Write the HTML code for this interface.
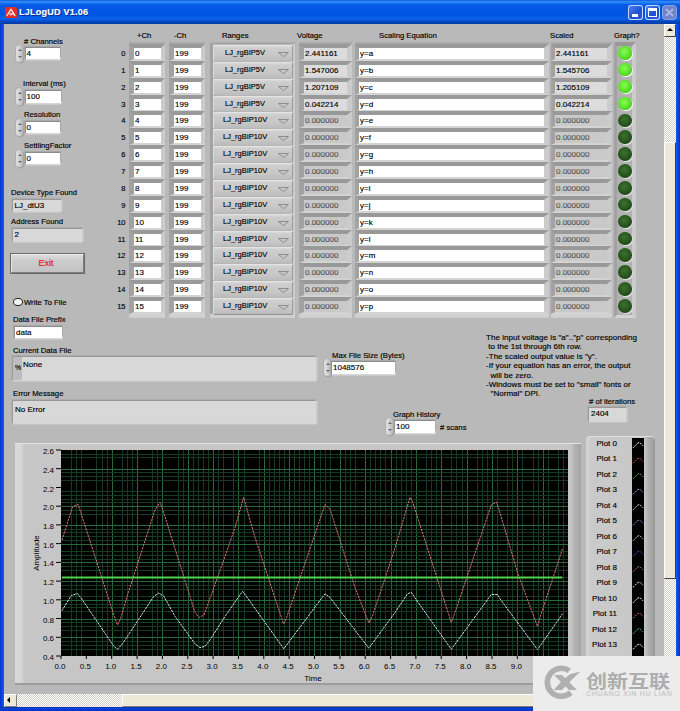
<!DOCTYPE html><html><head><meta charset="utf-8"><title>LJLogUD V1.06</title><style>
*{box-sizing:border-box;margin:0;padding:0}
html,body{width:680px;height:711px;overflow:hidden}
body{position:relative;background:#b9b9b9;font:8px "Liberation Sans","Noto Sans CJK SC",sans-serif;color:#000;-webkit-text-stroke:.15px #000}
.a{position:absolute}
.t{position:absolute;white-space:nowrap;line-height:10px;font-size:7.7px}
.wb{position:absolute;background:#fff;box-shadow:0 -1px 0 #8c8c8c,-1px -1px 0 #929292,-1px 0 0 #9a9a9a,-2px -2px 0 #a9a9a9,0 -2px 0 #a6a6a6,1px -2px 0 #aaa,-2px 0 0 #adadad,1px 0 0 #cdcdcd,0 1px 0 #d6d6d6,1px 1px 0 #d2d2d2,0 2px 0 #c9c9c9;padding-left:1px;line-height:11px;white-space:nowrap;overflow:hidden}
.ib{position:absolute;background:#d8d8d8;box-shadow:0 -1px 0 #999,-1px -1px 0 #9c9c9c,-1px 0 0 #a2a2a2,0 -2px 0 #acacac,-2px -2px 0 #b0b0b0,-2px 0 0 #b0b0b0,1px 0 0 #cecece,0 1px 0 #d4d4d4,1px 1px 0 #d0d0d0,0 2px 0 #c6c6c6,2px 0 0 #c4c4c4;padding-left:2px;line-height:12px;white-space:nowrap;overflow:hidden}
.ib.dim{background:#c6c6c6;color:#7a7a7a}
.ct{position:absolute;background:linear-gradient(90deg,#a9a9a9 0,#b1b1b1 3px,#b6b6b6 5px,#b6b6b6 calc(100% - 5px),#cfcfcf calc(100% - 2px),#d6d6d6 100%);border-top:2px solid #9a9a9a;box-shadow:inset 0 3px 2px -1px #a6a6a6, inset 0 -3px 2px -1px #d2d2d2}
.cell{position:absolute;border-style:solid;border-color:#999 #cbcbcb #d3d3d3 #a2a2a2;line-height:11px;white-space:nowrap;overflow:hidden;font-size:8px}
.sep{position:absolute;height:3px;background:linear-gradient(#d0d0d0,#bdbdbd 50%,#9c9c9c)}
.rb{position:absolute;background:linear-gradient(#d9d9d9 0,#cdcdcd 2px,#c8c8c8 60%,#bcbcbc 100%);border-bottom:1px solid #8f8f8f;border-right:1px solid #9b9b9b;border-top:1px solid #e4e4e4;border-left:1px solid #dedede;line-height:14px;white-space:nowrap;overflow:hidden;border-radius:1px}
.sp{position:absolute;width:7px;height:17px;border-radius:3.5px;background:linear-gradient(90deg,#dedede,#d6d6d6 40%,#b4b4b4);box-shadow:0 0 0 .6px #aaa,1px 1px 1px #999}
.sp:before,.sp:after{content:"";position:absolute;left:1.5px;border-left:2px solid transparent;border-right:2px solid transparent}
.sp:before{top:4px;border-bottom:2.5px solid #666}
.sp:after{bottom:4px;border-top:2.5px solid #666}
.led{position:absolute;width:14px;height:13.6px;border-radius:50%}
.led.on{background:radial-gradient(circle at 45% 40%,#8cf85c 0,#5fe82c 45%,#46c81c 80%,#3a9a20 100%);box-shadow:1.2px 1.2px .6px #ededed}
.led.off{background:radial-gradient(circle at 45% 40%,#3e7030 0,#2a5a20 45%,#1e4416 80%,#193a12 100%);box-shadow:1.2px 1.2px .6px #dcdcdc}
</style></head><body>
<div class="a" style="left:0;top:0;width:680px;height:24px;background:linear-gradient(#0a58da 0,#2f86f6 1.5px,#2a80f4 2.5px,#0b66ec 4px,#0358e4 6px,#0255e1 15px,#0a62ec 18px,#0857dc 20px,#0443b8 22px,#033aa6 24px)"></div>
<div class="a" style="left:0;top:24px;width:4px;height:687px;background:linear-gradient(90deg,#0831d9,#0a4be0 60%,#1a5ae8)"></div>
<div class="a" style="left:676px;top:24px;width:4px;height:687px;background:linear-gradient(90deg,#1a5ae8,#0a4be0 40%,#0831d9)"></div>
<div class="a" style="left:0;top:706.5px;width:680px;height:4.5px;background:linear-gradient(#0a2a90,#0a44d8 30%,#0831c9)"></div>
<svg class="a" style="left:5px;top:7px" width="12" height="11" viewBox="0 0 13 14" preserveAspectRatio="none"><rect x="0" y="0" width="13" height="14" rx="1.5" fill="#e03028"/><path d="M2 11 L6.5 3 L11 11 M4.5 9 H9.5" stroke="#fff" stroke-width="1.3" fill="none"/><path d="M6 11 L8.2 7.2 L10.4 11" stroke="#fff" stroke-width="1" fill="none"/></svg>
<div class="t" style="left:19px;top:5px;font-size:9px;line-height:15px;font-weight:bold;color:#fff;letter-spacing:.25px;-webkit-text-stroke:.15px #fff;text-shadow:1px 1px 0 #0a2a90">LJLogUD V1.06</div>
<div class="a" style="left:628px;top:5px;width:15px;height:15px;border-radius:3px;border:1px solid rgba(255,255,255,.75);background:linear-gradient(135deg,#4a82f0,#1a4ed6 60%,#2a60e0)"><div class="a" style="left:3px;top:8px;width:6px;height:3px;background:#fff"></div></div>
<div class="a" style="left:645px;top:5px;width:15px;height:15px;border-radius:3px;border:1px solid rgba(255,255,255,.75);background:linear-gradient(135deg,#4a82f0,#1a4ed6 60%,#2a60e0)"><div class="a" style="left:2px;top:2px;width:9px;height:9px;border:1px solid #fff;border-top-width:3px"></div></div>
<svg class="a" style="left:662px;top:5px" width="15" height="15" viewBox="0 0 15 15"><rect x=".5" y=".5" width="14" height="14" rx="3" fill="#6f84cc" stroke="#8ea2e0"/><path d="M4 4 L11 11 M11 4 L4 11" stroke="#a9b6e2" stroke-width="1.8"/></svg>
<div class="a" style="left:664px;top:24px;width:12px;height:670px;background-color:#f4f2ea;background-image:conic-gradient(#d4d0c8 25%,#fff 0 50%,#d4d0c8 0 75%,#fff 0);background-size:2px 2px"></div>
<div class="a" style="left:664px;top:24px;width:12px;height:13px;background:#ece9d8;border-right:1px solid #404040;border-bottom:1px solid #404040;border-left:1px solid #fff;border-top:1px solid #fff"><div class="a" style="left:2px;top:3px;border-left:3px solid transparent;border-right:3px solid transparent;border-bottom:3px solid #000"></div></div>
<div class="a" style="left:664px;top:142px;width:12px;height:437px;background:#ece9d8;border-right:1px solid #404040;border-bottom:1px solid #404040;border-left:1px solid #fff;border-top:1px solid #fff"></div>
<div class="a" style="left:4px;top:694px;width:660px;height:12.5px;background-color:#f4f2ea;background-image:conic-gradient(#d4d0c8 25%,#fff 0 50%,#d4d0c8 0 75%,#fff 0);background-size:2px 2px"></div>
<div class="a" style="left:4px;top:694px;width:12.5px;height:12.5px;background:#ece9d8;border-right:1px solid #808080;border-bottom:1px solid #808080;border-left:1px solid #fff;border-top:1px solid #fff"><div class="a" style="left:2px;top:2px;border-top:3px solid transparent;border-bottom:3px solid transparent;border-right:3px solid #000"></div></div>
<div class="a" style="left:122px;top:694px;width:520px;height:12.5px;background:#ece9d8;border-right:1px solid #808080;border-bottom:1px solid #808080;border-left:1px solid #fff;border-top:1px solid #fff"></div>
<div class="a" style="left:664px;top:694px;width:12px;height:12px;background:#ece9d8"></div>
<div class="t" style="left:24px;top:36.5px;"># Channels</div>
<div class="sp" style="left:16px;top:45px"></div>
<div class="wb" style="left:25.5px;top:48px;width:34px;height:11px">4</div>
<div class="t" style="left:23px;top:78.5px;">Interval (ms)</div>
<div class="sp" style="left:16px;top:88px"></div>
<div class="wb" style="left:25.5px;top:91px;width:35.5px;height:11.5px">100</div>
<div class="t" style="left:24px;top:109.5px;">Resolution</div>
<div class="sp" style="left:16px;top:119px"></div>
<div class="wb" style="left:25.5px;top:122px;width:34.5px;height:11px">0</div>
<div class="t" style="left:24px;top:140.5px;">SettlingFactor</div>
<div class="sp" style="left:16px;top:150px"></div>
<div class="wb" style="left:25.5px;top:153px;width:34.5px;height:11px">0</div>
<div class="t" style="left:11px;top:187.5px;">Device Type Found</div>
<div class="ib " style="left:12.5px;top:199.5px;width:48.5px;height:11.5px">LJ_dtU3</div>
<div class="t" style="left:11px;top:216.5px;">Address Found</div>
<div class="ib " style="left:12.5px;top:229px;width:69px;height:11.5px">2</div>
<div class="a" style="left:11px;top:254px;width:73px;height:19px;background:linear-gradient(#dcdcdc,#cdcdcd 30%,#c2c2c2);border:1px solid #7e7e7e;border-top-color:#f0f0f0;border-left-color:#e8e8e8;box-shadow:0 0 0 1px #686868;text-align:center;padding-right:3px;color:#e02020;font-size:9px;line-height:17px;-webkit-text-stroke:.2px #e02020">Exit</div>
<div class="a" style="left:13px;top:297.5px;width:9.5px;height:8.5px;border-radius:50%;background:#f4f4f4;border:1.2px solid #222"></div>
<div class="t" style="left:24px;top:297.5px;">Write To File</div>
<div class="t" style="left:13px;top:314.5px;">Data File Prefix</div>
<div class="wb" style="left:15px;top:327px;width:47px;height:10.5px">data</div>
<div class="t" style="left:13px;top:345.5px;">Current Data File</div>
<div class="ib " style="left:13px;top:356.5px;width:303px;height:23px"><span style="position:absolute;left:0;top:0;width:8.5px;height:23px;background:#bdbdbd"></span><span style="position:absolute;left:10px;top:2px">None</span><span style="position:absolute;left:2px;top:5px;font-size:7px">%</span></div>
<div class="t" style="left:13px;top:388.5px;">Error Message</div>
<div class="ib " style="left:13px;top:400.5px;width:303px;height:22px"><span style="position:absolute;left:2px;top:3px">No Error</span></div>
<div class="t" style="left:332px;top:350.5px;">Max File Size (Bytes)</div>
<div class="sp" style="left:324px;top:359px"></div>
<div class="wb" style="left:332px;top:362px;width:63px;height:12px">1048576</div>
<div class="t" style="left:393px;top:409.5px;">Graph History</div>
<div class="sp" style="left:386px;top:418px"></div>
<div class="wb" style="left:395px;top:421px;width:40px;height:12px">100</div>
<div class="t" style="left:440px;top:422.5px;"># scans</div>
<div class="t" style="left:589px;top:396.5px;"># of iterations</div>
<div class="ib " style="left:589px;top:408px;width:37px;height:13px">2404</div>
<div class="t" style="left:486px;top:333.0px;font-size:8px;letter-spacing:.04px">The input voltage is "a".."p" corresponding</div>
<div class="t" style="left:486px;top:342.4px;font-size:8px;letter-spacing:.04px">&nbsp;to the 1st through 6th row.</div>
<div class="t" style="left:486px;top:351.8px;font-size:8px;letter-spacing:.04px">-The scaled output value is "y".</div>
<div class="t" style="left:486px;top:361.2px;font-size:8px;letter-spacing:.04px">-If your equation has an error, the output</div>
<div class="t" style="left:486px;top:370.6px;font-size:8px;letter-spacing:.04px">&nbsp;&nbsp;will be zero.</div>
<div class="t" style="left:486px;top:380.0px;font-size:8px;letter-spacing:.04px">-Windows must be set to "small" fonts or</div>
<div class="t" style="left:486px;top:389.4px;font-size:8px;letter-spacing:.04px">&nbsp;&nbsp;"Normal" DPI.</div>
<div class="t" style="left:137px;top:30.5px;">+Ch</div>
<div class="t" style="left:174px;top:30.5px;">-Ch</div>
<div class="t" style="left:222px;top:30.5px;">Ranges</div>
<div class="t" style="left:297px;top:30.5px;">Voltage</div>
<div class="t" style="left:379px;top:30.5px;">Scaling Equation</div>
<div class="t" style="left:550px;top:30.5px;">Scaled</div>
<div class="t" style="left:614px;top:30.5px;">Graph?</div>
<div class="a" style="left:129px;top:42px;width:36px;height:3px;background:linear-gradient(#b0b0b0,#9c9c9c)"></div>
<div class="a" style="left:129px;top:314px;width:36px;height:4px;background:linear-gradient(#d3d3d3,#cdcdcd)"></div>
<div class="a" style="left:169px;top:42px;width:36px;height:3px;background:linear-gradient(#b0b0b0,#9c9c9c)"></div>
<div class="a" style="left:169px;top:314px;width:36px;height:4px;background:linear-gradient(#d3d3d3,#cdcdcd)"></div>
<div class="a" style="left:210px;top:42px;width:85px;height:3px;background:linear-gradient(#b0b0b0,#9c9c9c)"></div>
<div class="a" style="left:210px;top:314px;width:85px;height:4px;background:linear-gradient(#d3d3d3,#cdcdcd)"></div>
<div class="a" style="left:299px;top:42px;width:53px;height:3px;background:linear-gradient(#b0b0b0,#9c9c9c)"></div>
<div class="a" style="left:299px;top:314px;width:53px;height:4px;background:linear-gradient(#d3d3d3,#cdcdcd)"></div>
<div class="a" style="left:355px;top:42px;width:194px;height:3px;background:linear-gradient(#b0b0b0,#9c9c9c)"></div>
<div class="a" style="left:355px;top:314px;width:194px;height:4px;background:linear-gradient(#d3d3d3,#cdcdcd)"></div>
<div class="a" style="left:551px;top:42px;width:61px;height:3px;background:linear-gradient(#b0b0b0,#9c9c9c)"></div>
<div class="a" style="left:551px;top:314px;width:61px;height:4px;background:linear-gradient(#d3d3d3,#cdcdcd)"></div>
<div class="cell" style="left:614px;top:42px;width:22px;height:276px;border-width:4px 4px 3px 3px;background:#b1b1b1"></div>
<div class="t" style="left:107.5px;top:49px;width:18px;text-align:right;font-size:7.5px">0</div>
<div class="cell" style="left:129px;top:44px;width:36px;height:17px;border-width:4px 4px 2px 5px;background:#fff;color:#000;padding-left:1px">0</div>
<div class="cell" style="left:169px;top:44px;width:36px;height:17px;border-width:4px 4px 2px 5px;background:#fff;color:#000;padding-left:1px">199</div>
<div class="a" style="left:210px;top:44px;width:85px;height:17px;border-left:3px solid #a2a2a2;border-right:3px solid #cbcbcb;background:#b6b6b6"></div>
<div class="rb" style="left:213px;top:45px;width:80px;height:17px"><span style="position:absolute;left:11px;top:-.5px;font-size:7.5px">LJ_rgBIP5V</span><svg style="position:absolute;left:64px;top:5.5px" width="11" height="5" viewBox="0 0 11 5"><path d="M.5 .5 H10.5 L5.5 4.6 Z" fill="#c8c8c8" stroke="#868686" stroke-width=".9"/></svg></div>
<div class="cell" style="left:299px;top:44px;width:53px;height:17px;border-width:4px 5px 2px 5px;background:#dcdcdc;color:#000;padding-left:1px">2.441161</div>
<div class="cell" style="left:355px;top:44px;width:194px;height:17px;border-width:4px 5px 2px 4px;background:#fff;color:#000;padding-left:1px">y=a</div>
<div class="cell" style="left:551px;top:44px;width:61px;height:17px;border-width:4px 5px 2px 4px;background:#dcdcdc;color:#000;padding-left:1px">2.441161</div>
<div class="led on" style="left:617.5px;top:46.0px"></div>
<div class="t" style="left:107.5px;top:66px;width:18px;text-align:right;font-size:7.5px">1</div>
<div class="cell" style="left:129px;top:61px;width:36px;height:17px;border-width:4px 4px 2px 5px;background:#fff;color:#000;padding-left:1px">1</div>
<div class="cell" style="left:169px;top:61px;width:36px;height:17px;border-width:4px 4px 2px 5px;background:#fff;color:#000;padding-left:1px">199</div>
<div class="a" style="left:210px;top:61px;width:85px;height:17px;border-left:3px solid #a2a2a2;border-right:3px solid #cbcbcb;background:#b6b6b6"></div>
<div class="rb" style="left:213px;top:62px;width:80px;height:17px"><span style="position:absolute;left:11px;top:-.5px;font-size:7.5px">LJ_rgBIP5V</span><svg style="position:absolute;left:64px;top:5.5px" width="11" height="5" viewBox="0 0 11 5"><path d="M.5 .5 H10.5 L5.5 4.6 Z" fill="#c8c8c8" stroke="#868686" stroke-width=".9"/></svg></div>
<div class="cell" style="left:299px;top:61px;width:53px;height:17px;border-width:4px 5px 2px 5px;background:#dcdcdc;color:#000;padding-left:1px">1.547006</div>
<div class="cell" style="left:355px;top:61px;width:194px;height:17px;border-width:4px 5px 2px 4px;background:#fff;color:#000;padding-left:1px">y=b</div>
<div class="cell" style="left:551px;top:61px;width:61px;height:17px;border-width:4px 5px 2px 4px;background:#dcdcdc;color:#000;padding-left:1px">1.545706</div>
<div class="led on" style="left:617.5px;top:62.9px"></div>
<div class="t" style="left:107.5px;top:83px;width:18px;text-align:right;font-size:7.5px">2</div>
<div class="cell" style="left:129px;top:78px;width:36px;height:17px;border-width:4px 4px 2px 5px;background:#fff;color:#000;padding-left:1px">2</div>
<div class="cell" style="left:169px;top:78px;width:36px;height:17px;border-width:4px 4px 2px 5px;background:#fff;color:#000;padding-left:1px">199</div>
<div class="a" style="left:210px;top:78px;width:85px;height:17px;border-left:3px solid #a2a2a2;border-right:3px solid #cbcbcb;background:#b6b6b6"></div>
<div class="rb" style="left:213px;top:79px;width:80px;height:17px"><span style="position:absolute;left:11px;top:-.5px;font-size:7.5px">LJ_rgBIP5V</span><svg style="position:absolute;left:64px;top:5.5px" width="11" height="5" viewBox="0 0 11 5"><path d="M.5 .5 H10.5 L5.5 4.6 Z" fill="#c8c8c8" stroke="#868686" stroke-width=".9"/></svg></div>
<div class="cell" style="left:299px;top:78px;width:53px;height:17px;border-width:4px 5px 2px 5px;background:#dcdcdc;color:#000;padding-left:1px">1.207109</div>
<div class="cell" style="left:355px;top:78px;width:194px;height:17px;border-width:4px 5px 2px 4px;background:#fff;color:#000;padding-left:1px">y=c</div>
<div class="cell" style="left:551px;top:78px;width:61px;height:17px;border-width:4px 5px 2px 4px;background:#dcdcdc;color:#000;padding-left:1px">1.205109</div>
<div class="led on" style="left:617.5px;top:79.7px"></div>
<div class="t" style="left:107.5px;top:100px;width:18px;text-align:right;font-size:7.5px">3</div>
<div class="cell" style="left:129px;top:95px;width:36px;height:17px;border-width:4px 4px 2px 5px;background:#fff;color:#000;padding-left:1px">3</div>
<div class="cell" style="left:169px;top:95px;width:36px;height:17px;border-width:4px 4px 2px 5px;background:#fff;color:#000;padding-left:1px">199</div>
<div class="a" style="left:210px;top:95px;width:85px;height:17px;border-left:3px solid #a2a2a2;border-right:3px solid #cbcbcb;background:#b6b6b6"></div>
<div class="rb" style="left:213px;top:96px;width:80px;height:17px"><span style="position:absolute;left:11px;top:-.5px;font-size:7.5px">LJ_rgBIP5V</span><svg style="position:absolute;left:64px;top:5.5px" width="11" height="5" viewBox="0 0 11 5"><path d="M.5 .5 H10.5 L5.5 4.6 Z" fill="#c8c8c8" stroke="#868686" stroke-width=".9"/></svg></div>
<div class="cell" style="left:299px;top:95px;width:53px;height:17px;border-width:4px 5px 2px 5px;background:#dcdcdc;color:#000;padding-left:1px">0.042214</div>
<div class="cell" style="left:355px;top:95px;width:194px;height:17px;border-width:4px 5px 2px 4px;background:#fff;color:#000;padding-left:1px">y=d</div>
<div class="cell" style="left:551px;top:95px;width:61px;height:17px;border-width:4px 5px 2px 4px;background:#dcdcdc;color:#000;padding-left:1px">0.042214</div>
<div class="led on" style="left:617.5px;top:96.6px"></div>
<div class="t" style="left:107.5px;top:116px;width:18px;text-align:right;font-size:7.5px">4</div>
<div class="cell" style="left:129px;top:111px;width:36px;height:17px;border-width:4px 4px 2px 5px;background:#fff;color:#000;padding-left:1px">4</div>
<div class="cell" style="left:169px;top:111px;width:36px;height:17px;border-width:4px 4px 2px 5px;background:#fff;color:#000;padding-left:1px">199</div>
<div class="a" style="left:210px;top:111px;width:85px;height:17px;border-left:3px solid #a2a2a2;border-right:3px solid #cbcbcb;background:#b6b6b6"></div>
<div class="rb" style="left:213px;top:112px;width:80px;height:17px"><span style="position:absolute;left:9px;top:-.5px;font-size:7.5px">LJ_rgBIP10V</span><svg style="position:absolute;left:64px;top:5.5px" width="11" height="5" viewBox="0 0 11 5"><path d="M.5 .5 H10.5 L5.5 4.6 Z" fill="#c8c8c8" stroke="#868686" stroke-width=".9"/></svg></div>
<div class="cell" style="left:299px;top:111px;width:53px;height:17px;border-width:4px 5px 2px 5px;background:#c9c9c9;color:#808080;padding-left:1px">0.000000</div>
<div class="cell" style="left:355px;top:111px;width:194px;height:17px;border-width:4px 5px 2px 4px;background:#fff;color:#000;padding-left:1px">y=e</div>
<div class="cell" style="left:551px;top:111px;width:61px;height:17px;border-width:4px 5px 2px 4px;background:#c9c9c9;color:#808080;padding-left:1px">0.000000</div>
<div class="led off" style="left:617.5px;top:113.5px"></div>
<div class="t" style="left:107.5px;top:133px;width:18px;text-align:right;font-size:7.5px">5</div>
<div class="cell" style="left:129px;top:128px;width:36px;height:17px;border-width:4px 4px 2px 5px;background:#fff;color:#000;padding-left:1px">5</div>
<div class="cell" style="left:169px;top:128px;width:36px;height:17px;border-width:4px 4px 2px 5px;background:#fff;color:#000;padding-left:1px">199</div>
<div class="a" style="left:210px;top:128px;width:85px;height:17px;border-left:3px solid #a2a2a2;border-right:3px solid #cbcbcb;background:#b6b6b6"></div>
<div class="rb" style="left:213px;top:129px;width:80px;height:17px"><span style="position:absolute;left:9px;top:-.5px;font-size:7.5px">LJ_rgBIP10V</span><svg style="position:absolute;left:64px;top:5.5px" width="11" height="5" viewBox="0 0 11 5"><path d="M.5 .5 H10.5 L5.5 4.6 Z" fill="#c8c8c8" stroke="#868686" stroke-width=".9"/></svg></div>
<div class="cell" style="left:299px;top:128px;width:53px;height:17px;border-width:4px 5px 2px 5px;background:#c9c9c9;color:#808080;padding-left:1px">0.000000</div>
<div class="cell" style="left:355px;top:128px;width:194px;height:17px;border-width:4px 5px 2px 4px;background:#fff;color:#000;padding-left:1px">y=f</div>
<div class="cell" style="left:551px;top:128px;width:61px;height:17px;border-width:4px 5px 2px 4px;background:#c9c9c9;color:#808080;padding-left:1px">0.000000</div>
<div class="led off" style="left:617.5px;top:130.3px"></div>
<div class="t" style="left:107.5px;top:150px;width:18px;text-align:right;font-size:7.5px">6</div>
<div class="cell" style="left:129px;top:145px;width:36px;height:17px;border-width:4px 4px 2px 5px;background:#fff;color:#000;padding-left:1px">6</div>
<div class="cell" style="left:169px;top:145px;width:36px;height:17px;border-width:4px 4px 2px 5px;background:#fff;color:#000;padding-left:1px">199</div>
<div class="a" style="left:210px;top:145px;width:85px;height:17px;border-left:3px solid #a2a2a2;border-right:3px solid #cbcbcb;background:#b6b6b6"></div>
<div class="rb" style="left:213px;top:146px;width:80px;height:17px"><span style="position:absolute;left:9px;top:-.5px;font-size:7.5px">LJ_rgBIP10V</span><svg style="position:absolute;left:64px;top:5.5px" width="11" height="5" viewBox="0 0 11 5"><path d="M.5 .5 H10.5 L5.5 4.6 Z" fill="#c8c8c8" stroke="#868686" stroke-width=".9"/></svg></div>
<div class="cell" style="left:299px;top:145px;width:53px;height:17px;border-width:4px 5px 2px 5px;background:#c9c9c9;color:#808080;padding-left:1px">0.000000</div>
<div class="cell" style="left:355px;top:145px;width:194px;height:17px;border-width:4px 5px 2px 4px;background:#fff;color:#000;padding-left:1px">y=g</div>
<div class="cell" style="left:551px;top:145px;width:61px;height:17px;border-width:4px 5px 2px 4px;background:#c9c9c9;color:#808080;padding-left:1px">0.000000</div>
<div class="led off" style="left:617.5px;top:147.2px"></div>
<div class="t" style="left:107.5px;top:167px;width:18px;text-align:right;font-size:7.5px">7</div>
<div class="cell" style="left:129px;top:162px;width:36px;height:17px;border-width:4px 4px 2px 5px;background:#fff;color:#000;padding-left:1px">7</div>
<div class="cell" style="left:169px;top:162px;width:36px;height:17px;border-width:4px 4px 2px 5px;background:#fff;color:#000;padding-left:1px">199</div>
<div class="a" style="left:210px;top:162px;width:85px;height:17px;border-left:3px solid #a2a2a2;border-right:3px solid #cbcbcb;background:#b6b6b6"></div>
<div class="rb" style="left:213px;top:163px;width:80px;height:17px"><span style="position:absolute;left:9px;top:-.5px;font-size:7.5px">LJ_rgBIP10V</span><svg style="position:absolute;left:64px;top:5.5px" width="11" height="5" viewBox="0 0 11 5"><path d="M.5 .5 H10.5 L5.5 4.6 Z" fill="#c8c8c8" stroke="#868686" stroke-width=".9"/></svg></div>
<div class="cell" style="left:299px;top:162px;width:53px;height:17px;border-width:4px 5px 2px 5px;background:#c9c9c9;color:#808080;padding-left:1px">0.000000</div>
<div class="cell" style="left:355px;top:162px;width:194px;height:17px;border-width:4px 5px 2px 4px;background:#fff;color:#000;padding-left:1px">y=h</div>
<div class="cell" style="left:551px;top:162px;width:61px;height:17px;border-width:4px 5px 2px 4px;background:#c9c9c9;color:#808080;padding-left:1px">0.000000</div>
<div class="led off" style="left:617.5px;top:164.1px"></div>
<div class="t" style="left:107.5px;top:184px;width:18px;text-align:right;font-size:7.5px">8</div>
<div class="cell" style="left:129px;top:179px;width:36px;height:17px;border-width:4px 4px 2px 5px;background:#fff;color:#000;padding-left:1px">8</div>
<div class="cell" style="left:169px;top:179px;width:36px;height:17px;border-width:4px 4px 2px 5px;background:#fff;color:#000;padding-left:1px">199</div>
<div class="a" style="left:210px;top:179px;width:85px;height:17px;border-left:3px solid #a2a2a2;border-right:3px solid #cbcbcb;background:#b6b6b6"></div>
<div class="rb" style="left:213px;top:180px;width:80px;height:17px"><span style="position:absolute;left:9px;top:-.5px;font-size:7.5px">LJ_rgBIP10V</span><svg style="position:absolute;left:64px;top:5.5px" width="11" height="5" viewBox="0 0 11 5"><path d="M.5 .5 H10.5 L5.5 4.6 Z" fill="#c8c8c8" stroke="#868686" stroke-width=".9"/></svg></div>
<div class="cell" style="left:299px;top:179px;width:53px;height:17px;border-width:4px 5px 2px 5px;background:#c9c9c9;color:#808080;padding-left:1px">0.000000</div>
<div class="cell" style="left:355px;top:179px;width:194px;height:17px;border-width:4px 5px 2px 4px;background:#fff;color:#000;padding-left:1px">y=i</div>
<div class="cell" style="left:551px;top:179px;width:61px;height:17px;border-width:4px 5px 2px 4px;background:#c9c9c9;color:#808080;padding-left:1px">0.000000</div>
<div class="led off" style="left:617.5px;top:181.0px"></div>
<div class="t" style="left:107.5px;top:201px;width:18px;text-align:right;font-size:7.5px">9</div>
<div class="cell" style="left:129px;top:196px;width:36px;height:17px;border-width:4px 4px 2px 5px;background:#fff;color:#000;padding-left:1px">9</div>
<div class="cell" style="left:169px;top:196px;width:36px;height:17px;border-width:4px 4px 2px 5px;background:#fff;color:#000;padding-left:1px">199</div>
<div class="a" style="left:210px;top:196px;width:85px;height:17px;border-left:3px solid #a2a2a2;border-right:3px solid #cbcbcb;background:#b6b6b6"></div>
<div class="rb" style="left:213px;top:197px;width:80px;height:17px"><span style="position:absolute;left:9px;top:-.5px;font-size:7.5px">LJ_rgBIP10V</span><svg style="position:absolute;left:64px;top:5.5px" width="11" height="5" viewBox="0 0 11 5"><path d="M.5 .5 H10.5 L5.5 4.6 Z" fill="#c8c8c8" stroke="#868686" stroke-width=".9"/></svg></div>
<div class="cell" style="left:299px;top:196px;width:53px;height:17px;border-width:4px 5px 2px 5px;background:#c9c9c9;color:#808080;padding-left:1px">0.000000</div>
<div class="cell" style="left:355px;top:196px;width:194px;height:17px;border-width:4px 5px 2px 4px;background:#fff;color:#000;padding-left:1px">y=j</div>
<div class="cell" style="left:551px;top:196px;width:61px;height:17px;border-width:4px 5px 2px 4px;background:#c9c9c9;color:#808080;padding-left:1px">0.000000</div>
<div class="led off" style="left:617.5px;top:197.8px"></div>
<div class="t" style="left:107.5px;top:218px;width:18px;text-align:right;font-size:7.5px">10</div>
<div class="cell" style="left:129px;top:213px;width:36px;height:17px;border-width:4px 4px 2px 5px;background:#fff;color:#000;padding-left:1px">10</div>
<div class="cell" style="left:169px;top:213px;width:36px;height:17px;border-width:4px 4px 2px 5px;background:#fff;color:#000;padding-left:1px">199</div>
<div class="a" style="left:210px;top:213px;width:85px;height:17px;border-left:3px solid #a2a2a2;border-right:3px solid #cbcbcb;background:#b6b6b6"></div>
<div class="rb" style="left:213px;top:214px;width:80px;height:17px"><span style="position:absolute;left:9px;top:-.5px;font-size:7.5px">LJ_rgBIP10V</span><svg style="position:absolute;left:64px;top:5.5px" width="11" height="5" viewBox="0 0 11 5"><path d="M.5 .5 H10.5 L5.5 4.6 Z" fill="#c8c8c8" stroke="#868686" stroke-width=".9"/></svg></div>
<div class="cell" style="left:299px;top:213px;width:53px;height:17px;border-width:4px 5px 2px 5px;background:#c9c9c9;color:#808080;padding-left:1px">0.000000</div>
<div class="cell" style="left:355px;top:213px;width:194px;height:17px;border-width:4px 5px 2px 4px;background:#fff;color:#000;padding-left:1px">y=k</div>
<div class="cell" style="left:551px;top:213px;width:61px;height:17px;border-width:4px 5px 2px 4px;background:#c9c9c9;color:#808080;padding-left:1px">0.000000</div>
<div class="led off" style="left:617.5px;top:214.7px"></div>
<div class="t" style="left:107.5px;top:235px;width:18px;text-align:right;font-size:7.5px">11</div>
<div class="cell" style="left:129px;top:230px;width:36px;height:17px;border-width:4px 4px 2px 5px;background:#fff;color:#000;padding-left:1px">11</div>
<div class="cell" style="left:169px;top:230px;width:36px;height:17px;border-width:4px 4px 2px 5px;background:#fff;color:#000;padding-left:1px">199</div>
<div class="a" style="left:210px;top:230px;width:85px;height:17px;border-left:3px solid #a2a2a2;border-right:3px solid #cbcbcb;background:#b6b6b6"></div>
<div class="rb" style="left:213px;top:231px;width:80px;height:17px"><span style="position:absolute;left:9px;top:-.5px;font-size:7.5px">LJ_rgBIP10V</span><svg style="position:absolute;left:64px;top:5.5px" width="11" height="5" viewBox="0 0 11 5"><path d="M.5 .5 H10.5 L5.5 4.6 Z" fill="#c8c8c8" stroke="#868686" stroke-width=".9"/></svg></div>
<div class="cell" style="left:299px;top:230px;width:53px;height:17px;border-width:4px 5px 2px 5px;background:#c9c9c9;color:#808080;padding-left:1px">0.000000</div>
<div class="cell" style="left:355px;top:230px;width:194px;height:17px;border-width:4px 5px 2px 4px;background:#fff;color:#000;padding-left:1px">y=l</div>
<div class="cell" style="left:551px;top:230px;width:61px;height:17px;border-width:4px 5px 2px 4px;background:#c9c9c9;color:#808080;padding-left:1px">0.000000</div>
<div class="led off" style="left:617.5px;top:231.6px"></div>
<div class="t" style="left:107.5px;top:251px;width:18px;text-align:right;font-size:7.5px">12</div>
<div class="cell" style="left:129px;top:246px;width:36px;height:17px;border-width:4px 4px 2px 5px;background:#fff;color:#000;padding-left:1px">12</div>
<div class="cell" style="left:169px;top:246px;width:36px;height:17px;border-width:4px 4px 2px 5px;background:#fff;color:#000;padding-left:1px">199</div>
<div class="a" style="left:210px;top:246px;width:85px;height:17px;border-left:3px solid #a2a2a2;border-right:3px solid #cbcbcb;background:#b6b6b6"></div>
<div class="rb" style="left:213px;top:247px;width:80px;height:17px"><span style="position:absolute;left:9px;top:-.5px;font-size:7.5px">LJ_rgBIP10V</span><svg style="position:absolute;left:64px;top:5.5px" width="11" height="5" viewBox="0 0 11 5"><path d="M.5 .5 H10.5 L5.5 4.6 Z" fill="#c8c8c8" stroke="#868686" stroke-width=".9"/></svg></div>
<div class="cell" style="left:299px;top:246px;width:53px;height:17px;border-width:4px 5px 2px 5px;background:#c9c9c9;color:#808080;padding-left:1px">0.000000</div>
<div class="cell" style="left:355px;top:246px;width:194px;height:17px;border-width:4px 5px 2px 4px;background:#fff;color:#000;padding-left:1px">y=m</div>
<div class="cell" style="left:551px;top:246px;width:61px;height:17px;border-width:4px 5px 2px 4px;background:#c9c9c9;color:#808080;padding-left:1px">0.000000</div>
<div class="led off" style="left:617.5px;top:248.4px"></div>
<div class="t" style="left:107.5px;top:268px;width:18px;text-align:right;font-size:7.5px">13</div>
<div class="cell" style="left:129px;top:263px;width:36px;height:17px;border-width:4px 4px 2px 5px;background:#fff;color:#000;padding-left:1px">13</div>
<div class="cell" style="left:169px;top:263px;width:36px;height:17px;border-width:4px 4px 2px 5px;background:#fff;color:#000;padding-left:1px">199</div>
<div class="a" style="left:210px;top:263px;width:85px;height:17px;border-left:3px solid #a2a2a2;border-right:3px solid #cbcbcb;background:#b6b6b6"></div>
<div class="rb" style="left:213px;top:264px;width:80px;height:17px"><span style="position:absolute;left:9px;top:-.5px;font-size:7.5px">LJ_rgBIP10V</span><svg style="position:absolute;left:64px;top:5.5px" width="11" height="5" viewBox="0 0 11 5"><path d="M.5 .5 H10.5 L5.5 4.6 Z" fill="#c8c8c8" stroke="#868686" stroke-width=".9"/></svg></div>
<div class="cell" style="left:299px;top:263px;width:53px;height:17px;border-width:4px 5px 2px 5px;background:#c9c9c9;color:#808080;padding-left:1px">0.000000</div>
<div class="cell" style="left:355px;top:263px;width:194px;height:17px;border-width:4px 5px 2px 4px;background:#fff;color:#000;padding-left:1px">y=n</div>
<div class="cell" style="left:551px;top:263px;width:61px;height:17px;border-width:4px 5px 2px 4px;background:#c9c9c9;color:#808080;padding-left:1px">0.000000</div>
<div class="led off" style="left:617.5px;top:265.3px"></div>
<div class="t" style="left:107.5px;top:285px;width:18px;text-align:right;font-size:7.5px">14</div>
<div class="cell" style="left:129px;top:280px;width:36px;height:17px;border-width:4px 4px 2px 5px;background:#fff;color:#000;padding-left:1px">14</div>
<div class="cell" style="left:169px;top:280px;width:36px;height:17px;border-width:4px 4px 2px 5px;background:#fff;color:#000;padding-left:1px">199</div>
<div class="a" style="left:210px;top:280px;width:85px;height:17px;border-left:3px solid #a2a2a2;border-right:3px solid #cbcbcb;background:#b6b6b6"></div>
<div class="rb" style="left:213px;top:281px;width:80px;height:17px"><span style="position:absolute;left:9px;top:-.5px;font-size:7.5px">LJ_rgBIP10V</span><svg style="position:absolute;left:64px;top:5.5px" width="11" height="5" viewBox="0 0 11 5"><path d="M.5 .5 H10.5 L5.5 4.6 Z" fill="#c8c8c8" stroke="#868686" stroke-width=".9"/></svg></div>
<div class="cell" style="left:299px;top:280px;width:53px;height:17px;border-width:4px 5px 2px 5px;background:#c9c9c9;color:#808080;padding-left:1px">0.000000</div>
<div class="cell" style="left:355px;top:280px;width:194px;height:17px;border-width:4px 5px 2px 4px;background:#fff;color:#000;padding-left:1px">y=o</div>
<div class="cell" style="left:551px;top:280px;width:61px;height:17px;border-width:4px 5px 2px 4px;background:#c9c9c9;color:#808080;padding-left:1px">0.000000</div>
<div class="led off" style="left:617.5px;top:282.2px"></div>
<div class="t" style="left:107.5px;top:302px;width:18px;text-align:right;font-size:7.5px">15</div>
<div class="cell" style="left:129px;top:297px;width:36px;height:17px;border-width:4px 4px 2px 5px;background:#fff;color:#000;padding-left:1px">15</div>
<div class="cell" style="left:169px;top:297px;width:36px;height:17px;border-width:4px 4px 2px 5px;background:#fff;color:#000;padding-left:1px">199</div>
<div class="a" style="left:210px;top:297px;width:85px;height:17px;border-left:3px solid #a2a2a2;border-right:3px solid #cbcbcb;background:#b6b6b6"></div>
<div class="rb" style="left:213px;top:298px;width:80px;height:17px"><span style="position:absolute;left:9px;top:-.5px;font-size:7.5px">LJ_rgBIP10V</span><svg style="position:absolute;left:64px;top:5.5px" width="11" height="5" viewBox="0 0 11 5"><path d="M.5 .5 H10.5 L5.5 4.6 Z" fill="#c8c8c8" stroke="#868686" stroke-width=".9"/></svg></div>
<div class="cell" style="left:299px;top:297px;width:53px;height:17px;border-width:4px 5px 2px 5px;background:#c9c9c9;color:#808080;padding-left:1px">0.000000</div>
<div class="cell" style="left:355px;top:297px;width:194px;height:17px;border-width:4px 5px 2px 4px;background:#fff;color:#000;padding-left:1px">y=p</div>
<div class="cell" style="left:551px;top:297px;width:61px;height:17px;border-width:4px 5px 2px 4px;background:#c9c9c9;color:#808080;padding-left:1px">0.000000</div>
<div class="led off" style="left:617.5px;top:299.1px"></div>
<div class="a" style="left:15px;top:443px;width:566px;height:242px;background:linear-gradient(90deg,#dadada 0,#d4d4d4 7px,#c6c6c6 9px,#c6c6c6 556px,#b4b4b4 559px,#a4a4a4 566px);border-top:1px solid #e4e4e4;border-bottom:2px solid #9c9c9c"></div>
<svg class="a" style="left:0;top:0" width="680" height="711" viewBox="0 0 680 711"><rect x="61" y="450" width="507" height="206" fill="#000"/><g shape-rendering="crispEdges"><rect x="71" y="450" width="1" height="206" fill="#173a22"/><rect x="76" y="450" width="1" height="206" fill="#173a22"/><rect x="81" y="450" width="1" height="206" fill="#173a22"/><rect x="96" y="450" width="1" height="206" fill="#173a22"/><rect x="102" y="450" width="1" height="206" fill="#173a22"/><rect x="107" y="450" width="1" height="206" fill="#173a22"/><rect x="112" y="450" width="1" height="206" fill="#246a3a"/><rect x="122" y="450" width="1" height="206" fill="#173a22"/><rect x="127" y="450" width="1" height="206" fill="#173a22"/><rect x="132" y="450" width="1" height="206" fill="#173a22"/><rect x="137" y="450" width="1" height="206" fill="#246a3a"/><rect x="152" y="450" width="1" height="206" fill="#173a22"/><rect x="157" y="450" width="1" height="206" fill="#173a22"/><rect x="162" y="450" width="1" height="206" fill="#246a3a"/><rect x="178" y="450" width="1" height="206" fill="#173a22"/><rect x="183" y="450" width="1" height="206" fill="#173a22"/><rect x="188" y="450" width="1" height="206" fill="#246a3a"/><rect x="193" y="450" width="1" height="206" fill="#173a22"/><rect x="198" y="450" width="1" height="206" fill="#173a22"/><rect x="203" y="450" width="1" height="206" fill="#173a22"/><rect x="208" y="450" width="1" height="206" fill="#173a22"/><rect x="213" y="450" width="1" height="206" fill="#246a3a"/><rect x="218" y="450" width="1" height="206" fill="#173a22"/><rect x="223" y="450" width="1" height="206" fill="#173a22"/><rect x="233" y="450" width="1" height="206" fill="#173a22"/><rect x="238" y="450" width="1" height="206" fill="#246a3a"/><rect x="244" y="450" width="1" height="206" fill="#173a22"/><rect x="259" y="450" width="1" height="206" fill="#173a22"/><rect x="264" y="450" width="1" height="206" fill="#246a3a"/><rect x="269" y="450" width="1" height="206" fill="#173a22"/><rect x="274" y="450" width="1" height="206" fill="#173a22"/><rect x="279" y="450" width="1" height="206" fill="#173a22"/><rect x="284" y="450" width="1" height="206" fill="#173a22"/><rect x="289" y="450" width="1" height="206" fill="#246a3a"/><rect x="294" y="450" width="1" height="206" fill="#173a22"/><rect x="299" y="450" width="1" height="206" fill="#173a22"/><rect x="304" y="450" width="1" height="206" fill="#173a22"/><rect x="309" y="450" width="1" height="206" fill="#173a22"/><rect x="314" y="450" width="1" height="206" fill="#246a3a"/><rect x="320" y="450" width="1" height="206" fill="#173a22"/><rect x="325" y="450" width="1" height="206" fill="#173a22"/><rect x="330" y="450" width="1" height="206" fill="#173a22"/><rect x="340" y="450" width="1" height="206" fill="#246a3a"/><rect x="345" y="450" width="1" height="206" fill="#173a22"/><rect x="350" y="450" width="1" height="206" fill="#173a22"/><rect x="355" y="450" width="1" height="206" fill="#173a22"/><rect x="365" y="450" width="1" height="206" fill="#246a3a"/><rect x="370" y="450" width="1" height="206" fill="#173a22"/><rect x="375" y="450" width="1" height="206" fill="#173a22"/><rect x="380" y="450" width="1" height="206" fill="#173a22"/><rect x="385" y="450" width="1" height="206" fill="#173a22"/><rect x="391" y="450" width="1" height="206" fill="#246a3a"/><rect x="396" y="450" width="1" height="206" fill="#173a22"/><rect x="401" y="450" width="1" height="206" fill="#173a22"/><rect x="406" y="450" width="1" height="206" fill="#173a22"/><rect x="411" y="450" width="1" height="206" fill="#173a22"/><rect x="416" y="450" width="1" height="206" fill="#246a3a"/><rect x="426" y="450" width="1" height="206" fill="#173a22"/><rect x="431" y="450" width="1" height="206" fill="#173a22"/><rect x="436" y="450" width="1" height="206" fill="#173a22"/><rect x="441" y="450" width="1" height="206" fill="#246a3a"/><rect x="451" y="450" width="1" height="206" fill="#173a22"/><rect x="456" y="450" width="1" height="206" fill="#173a22"/><rect x="462" y="450" width="1" height="206" fill="#173a22"/><rect x="467" y="450" width="1" height="206" fill="#246a3a"/><rect x="477" y="450" width="1" height="206" fill="#173a22"/><rect x="482" y="450" width="1" height="206" fill="#173a22"/><rect x="487" y="450" width="1" height="206" fill="#173a22"/><rect x="492" y="450" width="1" height="206" fill="#246a3a"/><rect x="497" y="450" width="1" height="206" fill="#173a22"/><rect x="507" y="450" width="1" height="206" fill="#173a22"/><rect x="512" y="450" width="1" height="206" fill="#173a22"/><rect x="517" y="450" width="1" height="206" fill="#246a3a"/><rect x="522" y="450" width="1" height="206" fill="#173a22"/><rect x="533" y="450" width="1" height="206" fill="#173a22"/><rect x="538" y="450" width="1" height="206" fill="#173a22"/><rect x="543" y="450" width="1" height="206" fill="#246a3a"/><rect x="548" y="450" width="1" height="206" fill="#173a22"/><rect x="558" y="450" width="1" height="206" fill="#173a22"/><rect x="563" y="450" width="1" height="206" fill="#173a22"/><rect x="61" y="454" width="507" height="1" fill="#173a22"/><rect x="61" y="457" width="507" height="1" fill="#173a22"/><rect x="61" y="469" width="507" height="1" fill="#246a3a"/><rect x="61" y="472" width="507" height="1" fill="#173a22"/><rect x="61" y="476" width="507" height="1" fill="#173a22"/><rect x="61" y="480" width="507" height="1" fill="#173a22"/><rect x="61" y="491" width="507" height="1" fill="#173a22"/><rect x="61" y="495" width="507" height="1" fill="#173a22"/><rect x="61" y="499" width="507" height="1" fill="#173a22"/><rect x="61" y="502" width="507" height="1" fill="#173a22"/><rect x="61" y="506" width="507" height="1" fill="#246a3a"/><rect x="61" y="510" width="507" height="1" fill="#173a22"/><rect x="61" y="514" width="507" height="1" fill="#173a22"/><rect x="61" y="525" width="507" height="1" fill="#246a3a"/><rect x="61" y="529" width="507" height="1" fill="#173a22"/><rect x="61" y="532" width="507" height="1" fill="#173a22"/><rect x="61" y="536" width="507" height="1" fill="#173a22"/><rect x="61" y="540" width="507" height="1" fill="#173a22"/><rect x="61" y="544" width="507" height="1" fill="#246a3a"/><rect x="61" y="551" width="507" height="1" fill="#173a22"/><rect x="61" y="555" width="507" height="1" fill="#173a22"/><rect x="61" y="559" width="507" height="1" fill="#173a22"/><rect x="61" y="562" width="507" height="1" fill="#246a3a"/><rect x="61" y="566" width="507" height="1" fill="#173a22"/><rect x="61" y="570" width="507" height="1" fill="#173a22"/><rect x="61" y="577" width="507" height="1" fill="#173a22"/><rect x="61" y="581" width="507" height="1" fill="#246a3a"/><rect x="61" y="585" width="507" height="1" fill="#173a22"/><rect x="61" y="589" width="507" height="1" fill="#173a22"/><rect x="61" y="596" width="507" height="1" fill="#173a22"/><rect x="61" y="600" width="507" height="1" fill="#246a3a"/><rect x="61" y="604" width="507" height="1" fill="#173a22"/><rect x="61" y="607" width="507" height="1" fill="#173a22"/><rect x="61" y="611" width="507" height="1" fill="#173a22"/><rect x="61" y="619" width="507" height="1" fill="#246a3a"/><rect x="61" y="622" width="507" height="1" fill="#173a22"/><rect x="61" y="626" width="507" height="1" fill="#173a22"/><rect x="61" y="630" width="507" height="1" fill="#173a22"/><rect x="61" y="637" width="507" height="1" fill="#246a3a"/><rect x="61" y="641" width="507" height="1" fill="#173a22"/><rect x="61" y="645" width="507" height="1" fill="#173a22"/><rect x="61" y="649" width="507" height="1" fill="#173a22"/></g><polyline points="62.0,540.0 72.5,507.0 78.0,504.2 80.0,510.0 113.8,615.0 117.5,625.0 120.5,619.0 127.5,595.0 155.0,510.0 160.0,502.3 162.5,508.8 195.0,612.5 199.0,617.5 204.0,615.0 225.0,556.5 235.0,527.5 243.6,497.3 255.0,537.5 283.6,624.0 286.3,618.5 325.0,504.5 330.0,509.0 355.0,587.5 368.8,622.8 372.5,616.0 395.0,548.0 410.0,497.3 412.5,501.5 451.3,622.5 453.8,616.0 491.3,505.0 496.3,502.0 498.8,508.8 517.5,572.5 537.5,626.5 540.0,617.5 562.5,548.8" fill="none" stroke="#d47474" stroke-width="1" stroke-dasharray="2.4 .9"/><polyline points="62.0,610.5 71.3,595.5 77.5,593.6 82.5,600.0 113.8,646.3 117.5,649.3 122.5,643.8 153.8,596.3 158.8,593.0 163.8,596.3 175.0,616.3 195.0,643.8 200.0,647.6 205.0,646.3 210.0,640.0 225.0,616.5 242.5,591.3 246.3,596.3 283.8,648.8 325.0,593.8 330.0,597.5 368.8,648.2 395.0,612.5 407.5,593.8 411.3,592.3 413.8,596.3 451.3,649.3 491.3,594.5 497.5,594.5 500.0,598.8 537.5,649.6 562.5,613.8" fill="none" stroke="#cfeaea" stroke-width="1" stroke-dasharray="2.4 .9"/><line x1="62" y1="577.5" x2="562.4" y2="577.5" stroke="#4fd24f" stroke-width="1.8"/><line x1="56" y1="450.0" x2="61" y2="450.0" stroke="#000" stroke-width="1"/><text x="54" y="454.0" font-size="8" text-anchor="end" font-family="Liberation Sans,sans-serif">2.6</text><line x1="56" y1="468.7" x2="61" y2="468.7" stroke="#000" stroke-width="1"/><text x="54" y="472.7" font-size="8" text-anchor="end" font-family="Liberation Sans,sans-serif">2.4</text><line x1="56" y1="487.5" x2="61" y2="487.5" stroke="#000" stroke-width="1"/><text x="54" y="491.5" font-size="8" text-anchor="end" font-family="Liberation Sans,sans-serif">2.2</text><line x1="56" y1="506.2" x2="61" y2="506.2" stroke="#000" stroke-width="1"/><text x="54" y="510.2" font-size="8" text-anchor="end" font-family="Liberation Sans,sans-serif">2.0</text><line x1="56" y1="524.9" x2="61" y2="524.9" stroke="#000" stroke-width="1"/><text x="54" y="528.9" font-size="8" text-anchor="end" font-family="Liberation Sans,sans-serif">1.8</text><line x1="56" y1="543.6" x2="61" y2="543.6" stroke="#000" stroke-width="1"/><text x="54" y="547.6" font-size="8" text-anchor="end" font-family="Liberation Sans,sans-serif">1.6</text><line x1="56" y1="562.4" x2="61" y2="562.4" stroke="#000" stroke-width="1"/><text x="54" y="566.4" font-size="8" text-anchor="end" font-family="Liberation Sans,sans-serif">1.4</text><line x1="56" y1="581.1" x2="61" y2="581.1" stroke="#000" stroke-width="1"/><text x="54" y="585.1" font-size="8" text-anchor="end" font-family="Liberation Sans,sans-serif">1.2</text><line x1="56" y1="599.8" x2="61" y2="599.8" stroke="#000" stroke-width="1"/><text x="54" y="603.8" font-size="8" text-anchor="end" font-family="Liberation Sans,sans-serif">1.0</text><line x1="56" y1="618.5" x2="61" y2="618.5" stroke="#000" stroke-width="1"/><text x="54" y="622.5" font-size="8" text-anchor="end" font-family="Liberation Sans,sans-serif">0.8</text><line x1="56" y1="637.3" x2="61" y2="637.3" stroke="#000" stroke-width="1"/><text x="54" y="641.3" font-size="8" text-anchor="end" font-family="Liberation Sans,sans-serif">0.6</text><line x1="56" y1="656.0" x2="61" y2="656.0" stroke="#000" stroke-width="1"/><text x="54" y="660.0" font-size="8" text-anchor="end" font-family="Liberation Sans,sans-serif">0.4</text><line x1="61.0" y1="656" x2="61.0" y2="659" stroke="#000" stroke-width="1"/><text x="60.0" y="669" font-size="8" text-anchor="middle" font-family="Liberation Sans,sans-serif">0.0</text><line x1="86.3" y1="656" x2="86.3" y2="659" stroke="#000" stroke-width="1"/><text x="85.3" y="669" font-size="8" text-anchor="middle" font-family="Liberation Sans,sans-serif">0.5</text><line x1="111.7" y1="656" x2="111.7" y2="659" stroke="#000" stroke-width="1"/><text x="110.7" y="669" font-size="8" text-anchor="middle" font-family="Liberation Sans,sans-serif">1.0</text><line x1="137.1" y1="656" x2="137.1" y2="659" stroke="#000" stroke-width="1"/><text x="136.1" y="669" font-size="8" text-anchor="middle" font-family="Liberation Sans,sans-serif">1.5</text><line x1="162.4" y1="656" x2="162.4" y2="659" stroke="#000" stroke-width="1"/><text x="161.4" y="669" font-size="8" text-anchor="middle" font-family="Liberation Sans,sans-serif">2.0</text><line x1="187.8" y1="656" x2="187.8" y2="659" stroke="#000" stroke-width="1"/><text x="186.8" y="669" font-size="8" text-anchor="middle" font-family="Liberation Sans,sans-serif">2.5</text><line x1="213.1" y1="656" x2="213.1" y2="659" stroke="#000" stroke-width="1"/><text x="212.1" y="669" font-size="8" text-anchor="middle" font-family="Liberation Sans,sans-serif">3.0</text><line x1="238.5" y1="656" x2="238.5" y2="659" stroke="#000" stroke-width="1"/><text x="237.5" y="669" font-size="8" text-anchor="middle" font-family="Liberation Sans,sans-serif">3.5</text><line x1="263.8" y1="656" x2="263.8" y2="659" stroke="#000" stroke-width="1"/><text x="262.8" y="669" font-size="8" text-anchor="middle" font-family="Liberation Sans,sans-serif">4.0</text><line x1="289.1" y1="656" x2="289.1" y2="659" stroke="#000" stroke-width="1"/><text x="288.1" y="669" font-size="8" text-anchor="middle" font-family="Liberation Sans,sans-serif">4.5</text><line x1="314.5" y1="656" x2="314.5" y2="659" stroke="#000" stroke-width="1"/><text x="313.5" y="669" font-size="8" text-anchor="middle" font-family="Liberation Sans,sans-serif">5.0</text><line x1="339.9" y1="656" x2="339.9" y2="659" stroke="#000" stroke-width="1"/><text x="338.9" y="669" font-size="8" text-anchor="middle" font-family="Liberation Sans,sans-serif">5.5</text><line x1="365.2" y1="656" x2="365.2" y2="659" stroke="#000" stroke-width="1"/><text x="364.2" y="669" font-size="8" text-anchor="middle" font-family="Liberation Sans,sans-serif">6.0</text><line x1="390.6" y1="656" x2="390.6" y2="659" stroke="#000" stroke-width="1"/><text x="389.6" y="669" font-size="8" text-anchor="middle" font-family="Liberation Sans,sans-serif">6.5</text><line x1="415.9" y1="656" x2="415.9" y2="659" stroke="#000" stroke-width="1"/><text x="414.9" y="669" font-size="8" text-anchor="middle" font-family="Liberation Sans,sans-serif">7.0</text><line x1="441.2" y1="656" x2="441.2" y2="659" stroke="#000" stroke-width="1"/><text x="440.2" y="669" font-size="8" text-anchor="middle" font-family="Liberation Sans,sans-serif">7.5</text><line x1="466.6" y1="656" x2="466.6" y2="659" stroke="#000" stroke-width="1"/><text x="465.6" y="669" font-size="8" text-anchor="middle" font-family="Liberation Sans,sans-serif">8.0</text><line x1="492.0" y1="656" x2="492.0" y2="659" stroke="#000" stroke-width="1"/><text x="491.0" y="669" font-size="8" text-anchor="middle" font-family="Liberation Sans,sans-serif">8.5</text><line x1="517.3" y1="656" x2="517.3" y2="659" stroke="#000" stroke-width="1"/><text x="516.3" y="669" font-size="8" text-anchor="middle" font-family="Liberation Sans,sans-serif">9.0</text><line x1="542.7" y1="656" x2="542.7" y2="659" stroke="#000" stroke-width="1"/><text x="541.7" y="669" font-size="8" text-anchor="middle" font-family="Liberation Sans,sans-serif">9.5</text><text x="313" y="681" font-size="8" text-anchor="middle" font-family="Liberation Sans,sans-serif">Time</text><text transform="translate(38.5,553) rotate(-90)" font-size="8" text-anchor="middle" font-family="Liberation Sans,sans-serif">Amplitude</text></svg>
<div class="a" style="left:586px;top:436px;width:69px;height:222px;border-radius:4px 4px 0 0;background:linear-gradient(90deg,#d6d6d6 0,#cacaca 6px,#c8c8c8 44px,#c8c8c8 58px,#b0b0b0 62px,#9a9a9a 69px);border-top:1px solid #dedede"></div>
<div class="a" style="left:632px;top:438px;width:12px;height:220px;background:#000"></div>
<div class="t" style="left:586px;top:438.8px;width:31px;text-align:right;font-size:8px">Plot 0</div>
<div class="t" style="left:586px;top:454.3px;width:31px;text-align:right;font-size:8px">Plot 1</div>
<div class="t" style="left:586px;top:469.8px;width:31px;text-align:right;font-size:8px">Plot 2</div>
<div class="t" style="left:586px;top:485.3px;width:31px;text-align:right;font-size:8px">Plot 3</div>
<div class="t" style="left:586px;top:500.8px;width:31px;text-align:right;font-size:8px">Plot 4</div>
<div class="t" style="left:586px;top:516.3px;width:31px;text-align:right;font-size:8px">Plot 5</div>
<div class="t" style="left:586px;top:531.8px;width:31px;text-align:right;font-size:8px">Plot 6</div>
<div class="t" style="left:586px;top:547.3px;width:31px;text-align:right;font-size:8px">Plot 7</div>
<div class="t" style="left:586px;top:562.8px;width:31px;text-align:right;font-size:8px">Plot 8</div>
<div class="t" style="left:586px;top:578.3px;width:31px;text-align:right;font-size:8px">Plot 9</div>
<div class="t" style="left:586px;top:593.8px;width:31px;text-align:right;font-size:8px">Plot 10</div>
<div class="t" style="left:586px;top:609.3px;width:31px;text-align:right;font-size:8px">Plot 11</div>
<div class="t" style="left:586px;top:624.8px;width:31px;text-align:right;font-size:8px">Plot 12</div>
<div class="t" style="left:586px;top:640.3px;width:31px;text-align:right;font-size:8px">Plot 13</div>
<svg class="a" style="left:632px;top:438px" width="12" height="220" viewBox="0 0 12 220"><polyline points="1,9.8 6,4.8 8,4.8 11,7.8" fill="none" stroke="#ffffff" stroke-width="1" stroke-dasharray="2 1"/><polyline points="1,25.3 6,20.3 8,20.3 11,23.3" fill="none" stroke="#d05050" stroke-width="1" stroke-dasharray="2 1"/><polyline points="1,40.8 6,35.8 8,35.8 11,38.8" fill="none" stroke="#60c060" stroke-width="1" stroke-dasharray="2 1"/><polyline points="1,56.3 6,51.3 8,51.3 11,54.3" fill="none" stroke="#a0a0ff" stroke-width="1" stroke-dasharray="2 1"/><polyline points="1,71.8 6,66.8 8,66.8 11,69.8" fill="none" stroke="#e0e0e0" stroke-width="1" stroke-dasharray="2 1"/><polyline points="1,87.3 6,82.3 8,82.3 11,85.3" fill="none" stroke="#8a8ad8" stroke-width="1" stroke-dasharray="2 1"/><polyline points="1,102.8 6,97.8 8,97.8 11,100.8" fill="none" stroke="#c8c8ff" stroke-width="1" stroke-dasharray="2 1"/><polyline points="1,118.3 6,113.3 8,113.3 11,116.3" fill="none" stroke="#5050c0" stroke-width="1" stroke-dasharray="2 1"/><polyline points="1,133.8 6,128.8 8,128.8 11,131.8" fill="none" stroke="#d07070" stroke-width="1" stroke-dasharray="2 1"/><polyline points="1,149.3 6,144.3 8,144.3 11,147.3" fill="none" stroke="#e8e8e8" stroke-width="1" stroke-dasharray="2 1"/><polyline points="1,164.8 6,159.8 8,159.8 11,162.8" fill="none" stroke="#ffffff" stroke-width="1" stroke-dasharray="2 1"/><polyline points="1,180.3 6,175.3 8,175.3 11,178.3" fill="none" stroke="#c86060" stroke-width="1" stroke-dasharray="2 1"/><polyline points="1,195.8 6,190.8 8,190.8 11,193.8" fill="none" stroke="#50c050" stroke-width="1" stroke-dasharray="2 1"/><polyline points="1,211.3 6,206.3 8,206.3 11,209.3" fill="none" stroke="#ffffff" stroke-width="1" stroke-dasharray="2 1"/></svg>
<div class="a" style="left:533px;top:656px;width:147px;height:55px;background:#ececec"></div>
<svg class="a" style="left:0;top:0" width="680" height="711" viewBox="0 0 680 711"><path d="M569.3 670.8 A14.0 14.0 0 1 0 570.7 692.7" fill="none" stroke="#b0b0b0" stroke-width="5.6"/><polygon points="554,675 562,675 577,690 569,690" fill="#b0b0b0"/><polygon points="553.8,690 562,690 569.5,682 580.5,671.6 570,674.2 562,680.6" fill="#b0b0b0"/></svg>
<div class="t" style="left:586px;top:670.5px;font-size:18px;line-height:22px;color:#adadad;font-weight:700;letter-spacing:0;-webkit-text-stroke:0;transform:scaleX(1.165);transform-origin:0 0">创新互联</div>
<div class="t" style="left:586px;top:690px;font-size:7px;line-height:8px;color:#bbb;letter-spacing:.72px;-webkit-text-stroke:0">CHUANG XIN HU LIAN</div>
</body></html>
